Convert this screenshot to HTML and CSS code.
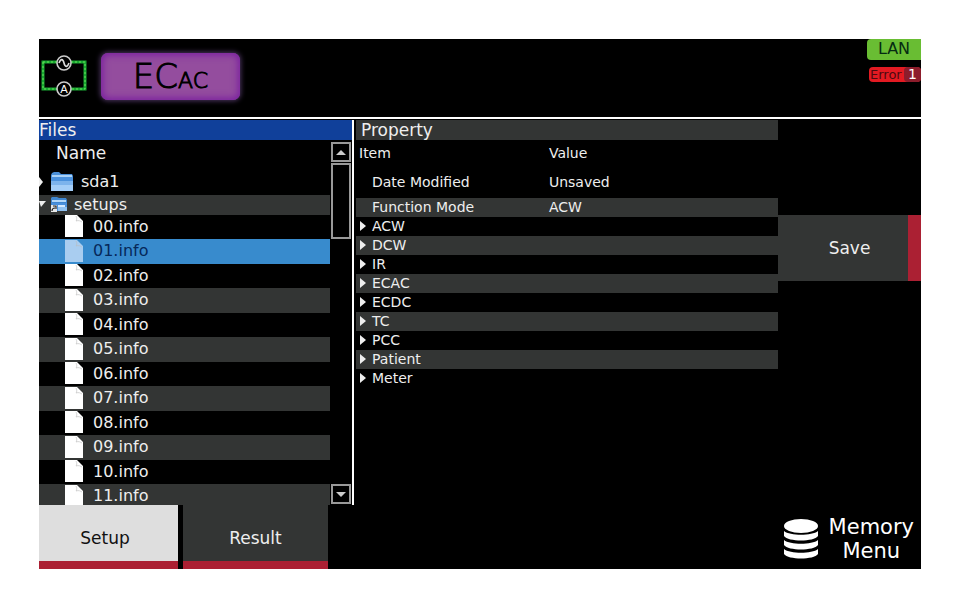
FILE: index.html
```
<!DOCTYPE html>
<html lang="en">
<head>
    <meta charset="UTF-8">
    <meta name="viewport" content="width=device-width, initial-scale=1.0">
    <title>Memory Menu</title>
    <link rel="stylesheet" href="styles.css">
</head>
<body>

    <!-- shared icons -->
    <svg class="sprite" aria-hidden="true">
        <symbol id="file" viewBox="0 0 18 22">
            <path d="M0 0h12l6 6v16H0z" fill="currentColor"/>
            <path d="M11 1c1 2 1 4 0 5 3-1 4 0 6 1" fill="none" stroke="#bbb" stroke-opacity="0.6"/>
        </symbol>
        <symbol id="folder" viewBox="0 0 24 20">
            <path d="M1 3l1-2 2-1h5l2 2h11l1 2v3H1z" fill="#4a8fd8"/>
            <path d="M2 3h20v2H2z" fill="#a9d0f5"/>
            <path d="M1 5h22v14H1z" fill="#4a90dc"/>
            <path d="M1 9h22v4H1z" fill="#7db3ec"/>
            <path d="M1 13h22v6H1z" fill="#a4cdf7"/>
        </symbol>
        <symbol id="folder-link" viewBox="0 0 18 16">
            <path d="M1 2l1-1h5l2 1h7l1 2v11H1z" fill="#3f86d0"/>
            <path d="M2 4h14v2H2z" fill="#b5d8f8"/>
            <path d="M2 7h15v8H2z" fill="#4a90dc"/>
            <path d="M8 11h9v4H8z" fill="#8fc0f0"/>
            <path d="M8 9h7v2H8z" fill="#d4e9ff"/>
            <path d="M1 9h6v7H1z" fill="#e8e8e8"/>
            <path d="M2 15c0-2 1-3 3-3M3 10h3v3" fill="none" stroke="#222" stroke-width="1.2"/>
        </symbol>
    </svg>

    <div class="device">
        <header class="topbar">
            <svg class="circuit" viewBox="0 0 46 44" aria-hidden="true">
                <path d="M2 8h42v27H2z" fill="none" stroke="#18a832" stroke-width="3"/>
                <path d="M2 8h42v27H2z" fill="none" stroke="#6be35a" stroke-dasharray="2 2"/>
                <circle cx="23" cy="9" r="7" fill="#000" stroke="#ccc" stroke-width="1.6"/>
                <path d="M18 9c2-5 4-4 5 0s3 5 5 0" fill="none" stroke="#ddd" stroke-width="1.6"/>
                <circle cx="23" cy="35" r="7" fill="#000" stroke="#ccc" stroke-width="1.6"/>
                <text x="23" y="39" text-anchor="middle">A</text>
            </svg>
            <h1 class="mode">EC<small>AC</small></h1>
            <div class="status">
                <span class="lan">LAN</span>
                <span class="error">Error <b>1</b></span>
            </div>
        </header>

        <main class="main">
            <section class="files">
                <h2>Files</h2>
                <div class="files-body">
                    <div class="tree">
                        <div class="tree-head">Name</div>
                        <ul>
                            <li class="folder"><i class="closed"></i><svg class="folder-icon"><use href="#folder"/></svg>sda1</li>
                            <li class="folder-open"><i class="opened"></i><svg class="link-icon"><use href="#folder-link"/></svg>setups</li>
                        </ul>
                        <ul class="entries">
                            <li><svg><use href="#file"/></svg>00.info</li>
                            <li class="selected"><svg><use href="#file"/></svg>01.info</li>
                            <li><svg><use href="#file"/></svg>02.info</li>
                            <li><svg><use href="#file"/></svg>03.info</li>
                            <li><svg><use href="#file"/></svg>04.info</li>
                            <li><svg><use href="#file"/></svg>05.info</li>
                            <li><svg><use href="#file"/></svg>06.info</li>
                            <li><svg><use href="#file"/></svg>07.info</li>
                            <li><svg><use href="#file"/></svg>08.info</li>
                            <li><svg><use href="#file"/></svg>09.info</li>
                            <li><svg><use href="#file"/></svg>10.info</li>
                            <li><svg><use href="#file"/></svg>11.info</li>
                        </ul>
                    </div>
                    <div class="scrollbar">
                        <button type="button" aria-label="Scroll up"><i class="up"></i></button>
                        <div class="thumb"></div>
                        <button type="button" class="down-button" aria-label="Scroll down"><i class="down"></i></button>
                    </div>
                </div>
            </section>

            <section class="property">
                <h2>Property</h2>
                <table>
                    <thead>
                        <tr><th>Item</th><th>Value</th></tr>
                    </thead>
                    <tbody>
                        <tr class="tall"><td>Date Modified</td><td>Unsaved</td></tr>
                        <tr><td>Function Mode</td><td>ACW</td></tr>
                        <tr><td><i class="closed"></i>ACW</td><td></td></tr>
                        <tr><td><i class="closed"></i>DCW</td><td></td></tr>
                        <tr><td><i class="closed"></i>IR</td><td></td></tr>
                        <tr><td><i class="closed"></i>ECAC</td><td></td></tr>
                        <tr><td><i class="closed"></i>ECDC</td><td></td></tr>
                        <tr><td><i class="closed"></i>TC</td><td></td></tr>
                        <tr><td><i class="closed"></i>PCC</td><td></td></tr>
                        <tr><td><i class="closed"></i>Patient</td><td></td></tr>
                        <tr><td><i class="closed"></i>Meter</td><td></td></tr>
                    </tbody>
                </table>
            </section>

            <aside class="actions">
                <button type="button" class="save">Save</button>
            </aside>
        </main>

        <footer class="bottom">
            <button type="button" class="tab active">Setup</button>
            <button type="button" class="tab">Result</button>
            <button type="button" class="memory">
                <svg viewBox="0 0 36 42" aria-hidden="true">
                    <ellipse cx="18" cy="8" rx="17" ry="7" fill="#fff"/>
                    <path d="M1 13c6 5 28 5 34 0v5c-4 6-30 6-34 0zM1 22c6 5 28 5 34 0v5c-4 6-30 6-34 0zM1 31c6 5 28 5 34 0v5c-4 6-30 6-34 0z" fill="#fff"/>
                </svg>
                <span>Memory<br>Menu</span>
            </button>
        </footer>
    </div>

</body>
</html>
```
FILE: styles.css
```
* {
    box-sizing: border-box;
}

body {
    margin: 0;
    padding: 39px;
    background: #fff;
    color: #eee;
    font-family: "DejaVu Sans", sans-serif;
    font-size: 16px;
}

h1, h2, ul {
    margin: 0;
    padding: 0;
    font-weight: normal;
}

button {
    margin: 0;
    padding: 0;
    border: none;
    color: #eee;
    font-family: inherit;
    font-size: 17px;
    cursor: pointer;
}

.sprite {
    position: absolute;
    width: 0;
    height: 0;
}

.device {
    background: #000;
}

/* top bar */
.topbar {
    display: flex;
    align-items: flex-start;
    height: 80px;
    border-bottom: 2px solid #fff;
}

.circuit {
    width: 46px;
    height: 44px;
    margin: 15px 14px 0 2px;
}

.circuit text {
    fill: #fff;
    font-size: 11px;
}

.mode {
    width: 139px;
    height: 47px;
    margin-top: 14px;
    border-radius: 7px;
    background: #944d9e;
    box-shadow: inset 0 0 7px 2px #7a1fa0, 0 0 5px 1px #4c3560;
    color: #000;
    font-size: 34px;
    font-weight: 200;
    line-height: 47px;
    text-align: center;
    -webkit-text-stroke: 1px #000;
}

.mode small {
    font-size: 22px;
}

.status {
    display: flex;
    flex-direction: column;
    align-items: flex-end;
    gap: 7px;
    margin-left: auto;
}

.lan {
    width: 54px;
    height: 21px;
    border-radius: 4px 0 0 4px;
    background: #69bd33;
    color: #052b12;
    line-height: 19px;
    text-align: center;
}

.error {
    display: flex;
    justify-content: space-between;
    width: 52px;
    height: 15px;
    padding-left: 1px;
    border-radius: 4px;
    background: #e31a22;
    color: #4d0a10;
    font-size: 13px;
    line-height: 15px;
}

.error b {
    width: 17px;
    border-radius: 4px;
    background: #8c1d2c;
    color: #fff;
    font-size: 14px;
    font-weight: normal;
    text-align: center;
}

/* main area */
.main {
    display: grid;
    grid-template-columns: minmax(0, 313fr) minmax(0, 426fr) 143px;
    margin-top: 1px;
}

h2 {
    height: 20px;
    font-size: 17px;
    line-height: 20px;
}

.files h2 {
    background: #10409a;
}

.files-body {
    display: flex;
    height: 365px;
}

.tree {
    flex: 1;
    overflow: hidden;
}

.tree-head {
    height: 30px;
    padding-left: 17px;
    font-size: 17px;
    line-height: 26px;
}

.tree ul {
    list-style: none;
}

.tree li {
    display: flex;
    align-items: center;
    height: 24px;
    padding-bottom: 2px;
}

.tree .folder {
    height: 25px;
}

.tree .folder-open {
    height: 20px;
    background: #333534;
}

.folder-icon {
    width: 24px;
    height: 20px;
    margin: 0 7px;
}

.link-icon {
    width: 18px;
    height: 16px;
    margin: 0 6px 0 4px;
}

.tree .entries li {
    padding-left: 26px;
}

.entries li:nth-child(even) {
    height: 25px;
    background: #333534;
}

.entries li.selected {
    background: #388bcd;
    color: #06285a;
}

.entries svg {
    width: 18px;
    height: 22px;
    margin-right: 10px;
    color: #fff;
}

.entries .selected svg {
    color: #a9cdf0;
}

/* arrows */
.closed {
    display: inline-block;
    border: 5px solid transparent;
    border-left-color: #eee;
    border-right: none;
}

.opened {
    border: 5px solid transparent;
    border-top: 6px solid #eee;
    border-bottom: none;
    border-left-width: 2px;
}

.tree .closed {
    border-left-width: 4px;
}

.up,
.down {
    border: 5px solid transparent;
}

.up {
    border-bottom-color: #ccc;
    border-top: none;
}

.down {
    border-top-color: #ccc;
    border-bottom: none;
}

.scrollbar {
    display: flex;
    flex-direction: column;
    width: 22px;
    padding: 2px 1px 1px;
}

.scrollbar button {
    display: flex;
    align-items: center;
    justify-content: center;
    height: 20px;
    border: 2px solid #999;
    background: #000;
}

.thumb {
    height: 76px;
    margin-top: 1px;
    border: 2px solid #999;
}

.scrollbar .down-button {
    margin-top: auto;
}

/* property table */
.property {
    padding-left: 2px;
    border-left: 2px solid #fff;
}

.property h2 {
    padding-left: 5px;
    background: #333534;
}

table {
    width: 100%;
    border-collapse: collapse;
    table-layout: fixed;
    font-size: 14px;
}

th {
    height: 29px;
    padding: 0 0 3px 3px;
    font-weight: normal;
    text-align: left;
}

th:first-child {
    width: 45%;
}

td {
    height: 19px;
    padding: 0 0 0 3px;
    line-height: 19px;
}

td:first-child {
    padding-left: 16px;
}

tbody tr:nth-child(even) {
    background: #333534;
}

.tall td {
    height: 29px;
    padding-bottom: 3px;
}

td .closed {
    margin: 0 6px 0 -12px;
    border-left-width: 6px;
}

/* buttons */
.save {
    width: 100%;
    height: 66px;
    margin-top: 95px;
    padding-left: 13px;
    border-right: 13px solid #ab2033;
    background: #333534;
}

.bottom {
    display: flex;
    gap: 5px;
    height: 64px;
}

.tab {
    flex: 0 1 145px;
    padding-top: 9px;
    border-bottom: 8px solid #ab2033;
    background: #333534;
}

.tab.active {
    flex-basis: 139px;
    padding-right: 7px;
    background: #dedede;
    color: #111;
}

.memory {
    display: flex;
    align-items: center;
    gap: 10px;
    margin-left: auto;
    padding: 3px 7px 0 0;
    background: none;
    color: #fff;
    font-size: 21px;
    line-height: 24px;
}

.memory svg {
    width: 36px;
    height: 42px;
}
```
